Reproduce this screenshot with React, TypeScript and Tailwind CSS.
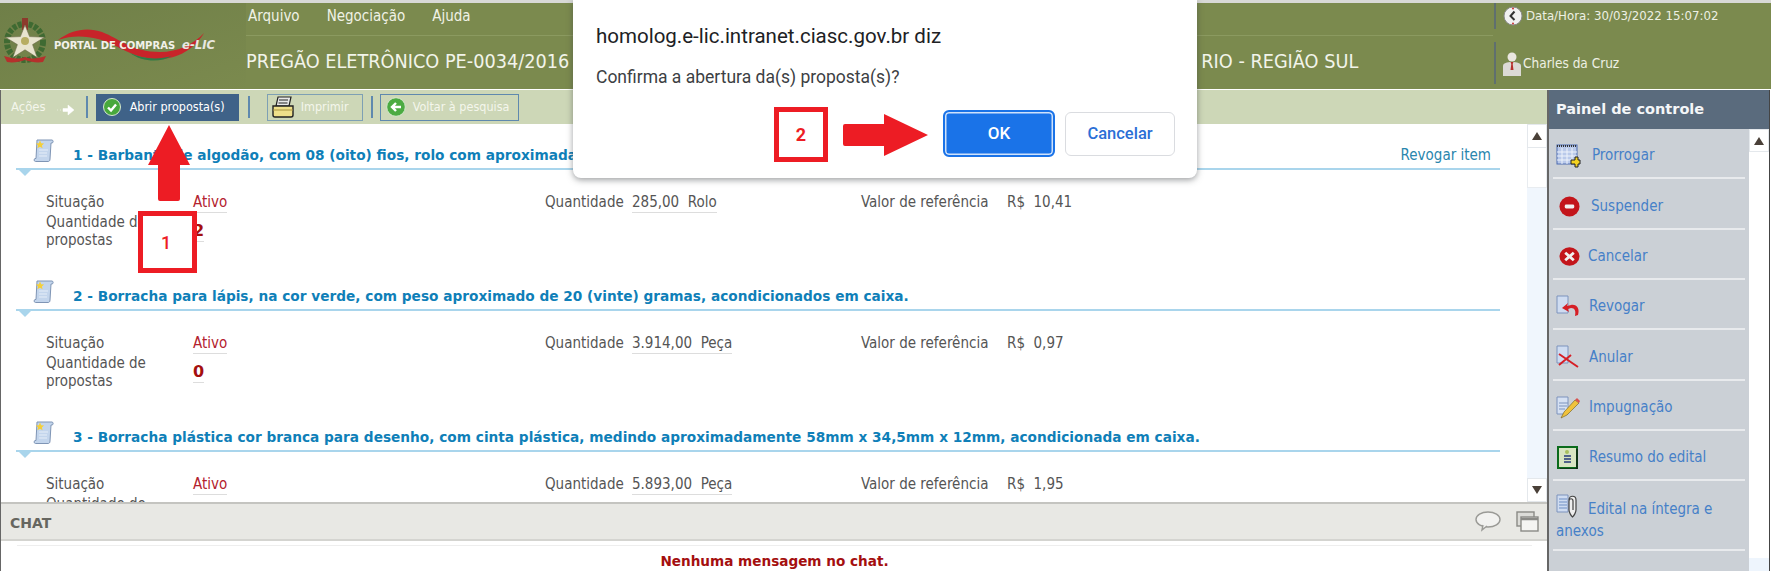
import React from "react";

const body = { fontFamily: '"DejaVu Sans Condensed", "Noto Sans", sans-serif' };
const bold = { fontFamily: '"DejaVu Sans", Verdana, sans-serif' };
const dlg = { fontFamily: 'Roboto, "Noto Sans", sans-serif' };

function Emblem() {
  return (
    <svg width="46" height="48" viewBox="0 0 46 48">
      <circle cx="23" cy="26" r="18" fill="none" stroke="#3f6a32" strokeWidth="6" strokeDasharray="4 1.5" />
      <rect x="20" y="2" width="6" height="12" fill="#8c3a2c" />
      <path d="M23 9l4.6 11.6 15 .6-12 7.4 4.6 13L23 33.8 10.800 41.600l4.600-13-12-7.400 15-.6z" fill="#e8e4cf" stroke="#6d6a4a" strokeWidth=".6" />
      <circle cx="23" cy="25" r="4" fill="#b7ad63" />
      <path d="M2 40c8 2 13 4 21 1 8 3 13 1 21-1l-3 6c-6 1-12 0-18-2-6 2-12 3-18 2z" fill="#b5302c" />
    </svg>
  );
}

function Logo() {
  return (
    <div className="relative w-[246px] h-[86px] shrink-0 bg-gradient-to-br from-[#6f7f48] to-[#7b8a4e]">
      <div className="absolute left-[2px] top-[13px]"><Emblem /></div>
      <svg className="absolute left-[50px] top-[20px]" width="170" height="42" viewBox="0 0 170 42">
        <path d="M8 17C22 6 38 4 52 9c18 7 30 20 58 20 18 0 34-8 44-19-10 17-28 27-48 26-26-1-38-15-58-20C36 13 22 12 8 17z" fill="#c8242a" />
        <path d="M80 30c12 6 28 7 42 3-12 7-30 6-42-3z" fill="#2f7a45" />
      </svg>
      <span className="absolute left-[54px] top-[36px] text-[10px] leading-[14px] font-bold text-[#f2f2ea] whitespace-nowrap" style={bold}>PORTAL DE COMPRAS</span>
      <span className="absolute left-[182px] top-[34px] text-[13px] leading-[16px] font-bold italic text-[#e8e8e0] whitespace-nowrap" style={body}>e-LIC</span>
    </div>
  );
}

function Clock() {
  return (
    <svg width="20" height="20" viewBox="0 0 20 20">
      <circle cx="10" cy="10" r="9" fill="#f1f1f1" stroke="#8b8b8b" />
      <path d="M11.500 5.500L7.500 10l4 4" fill="none" stroke="#333" strokeWidth="2" />
      <circle cx="10" cy="2.500" r="1" fill="#c33" /><circle cx="10" cy="17.500" r="1" fill="#c33" />
    </svg>
  );
}

function Person() {
  return (
    <svg width="20" height="25" viewBox="0 0 20 25">
      <circle cx="10" cy="6" r="4.500" fill="#e9e6df" />
      <path d="M1 25V15c0-3 4-4 9-4s9 1 9 4v10z" fill="#dcdad5" />
      <path d="M8.500 11h3l-.8 2 .8 6H8.500l.8-6z" fill="#b5302c" />
    </svg>
  );
}

function Sep() {
  return <div className="w-[2px] h-[22px] bg-[#5f89ae] shrink-0" />;
}

function Check() {
  return (
    <svg width="18" height="18" viewBox="0 0 18 18">
      <circle cx="9" cy="9" r="8.500" fill="#48a83c" stroke="#d7e8cf" />
      <path d="M5 9.500l3 3 5-6" fill="none" stroke="#fff" strokeWidth="2.400" />
    </svg>
  );
}

function Printer() {
  return (
    <svg width="24" height="24" viewBox="0 0 24 24">
      <path d="M7 2h13l-2 9H5z" fill="#e8e8e8" stroke="#222" strokeWidth="1.200" />
      <path d="M8 5h9M7.500 8h9" stroke="#222" />
      <path d="M2 11h20v9c0 1-1 2-2 2H4c-1 0-2-1-2-2z" fill="#efe08a" stroke="#222" strokeWidth="1.400" />
      <path d="M2 15h20" stroke="#a8933f" />
    </svg>
  );
}

function Back() {
  return (
    <svg width="20" height="20" viewBox="0 0 20 20">
      <circle cx="10" cy="10" r="9.300" fill="#4cab42" stroke="#d7e8cf" />
      <path d="M15 10H7M10 6l-4 4 4 4" fill="none" stroke="#fff" strokeWidth="2.400" />
    </svg>
  );
}

function Scroll() {
  return (
    <svg width="21" height="23" viewBox="0 0 21 23">
      <path d="M4 1h15c1.500 0 1.500 3 0 3h-1l-1 16c0 2-1 2.500-2 2.500H2.500C1 22.500.500 20 2 19.500H3z" fill="#c3d5ec" stroke="#7f95b5" />
      <path d="M6 11h9M6 14h8M6 17h8" stroke="#e6eef8" />
      <path d="M7 1.500l1.200 2.700 2.900.3-2.200 1.900.7 2.900L7 7.800 4.400 9.300l.7-2.900L2.900 4.500l2.900-.3z" fill="#f4cf3a" />
    </svg>
  );
}

const items = [
  { t: "1 - Barbante de algodão, com 08 (oito) fios, rolo com aproximadamente 500 metros.", q: "285,00", u: "Rolo", v: "10,41", n: "2", rev: true },
  { t: "2 - Borracha para lápis, na cor verde, com peso aproximado de 20 (vinte) gramas, acondicionados em caixa.", q: "3.914,00", u: "Peça", v: "0,97", n: "0", rev: false },
  { t: "3 - Borracha plástica cor branca para desenho, com cinta plástica, medindo aproximadamente 58mm x 34,5mm x 12mm, acondicionada em caixa.", q: "5.893,00", u: "Peça", v: "1,95", n: "0", rev: false },
];

function Item({ it }: { it: (typeof items)[number] }) {
  return (
    <div className="h-[141px] shrink-0">
      <div className="relative ml-[15px] w-[1484px] h-[46px] border-b-2 border-[#a9d5ec] flex items-start pt-[15px] pl-[17px]">
        <Scroll />
        <span className="ml-[19px] mt-[6px] text-[13.700px] leading-[20px] font-bold text-[#0f7fb8] whitespace-nowrap" style={bold}>{it.t}</span>
        {it.rev && <span className="absolute right-[9px] top-[21px] text-[15px] leading-[20px] text-[#2a86ad]">Revogar item</span>}
        <div className="absolute left-[2px] top-[45px] w-0 h-0 border-l-[7px] border-r-[7px] border-t-[7px] border-l-transparent border-r-transparent border-t-[#a9d5ec]" />
      </div>
      <div className="ml-[45px] mt-[23px] grid grid-cols-[147px_352px_87px_229px_146px_1fr] text-[15px] leading-[18.500px] text-[#555]">
        <span>Situação</span>
        <span><span className="inline-block border-b border-[#ddd] text-[#b3222e] leading-[17.500px]">Ativo</span></span>
        <span>Quantidade</span>
        <span><span className="inline-block border-b border-[#ddd] leading-[17.500px] whitespace-pre">{it.q}  {it.u}</span></span>
        <span>Valor de referência</span>
        <span className="whitespace-pre">R$  {it.v}</span>
        <span className="w-[118px]">Quantidade de propostas</span>
        <span className="self-center"><span className="inline-block border-b border-[#ddd] text-[16px] leading-[20px] font-bold text-[#a40f0f]" style={bold}>{it.n}</span></span>
      </div>
    </div>
  );
}

function ScrollBtn({ up, h }: { up: boolean; h: string }) {
  return (
    <div className={`${h} bg-white border border-[#e4e8ec] flex items-center justify-center shrink-0`}>
      <div className={up
        ? "w-0 h-0 border-l-[5px] border-r-[5px] border-b-[8px] border-l-transparent border-r-transparent border-b-[#4a4038]"
        : "w-0 h-0 border-l-[5px] border-r-[5px] border-t-[8px] border-l-transparent border-r-transparent border-t-[#4a4038]"} />
    </div>
  );
}

const doc = "M3 1h11v17H3z";
function PanelIcon({ k }: { k: string }) {
  if (k === "cal") return (
    <svg width="25" height="26" viewBox="0 0 25 26">
      <rect x="1" y="2" width="20" height="19" fill="#b9c9ea" stroke="#4c6ab0" />
      <path d="M1 3h20" stroke="#333" strokeWidth="2" strokeDasharray="1 1" />
      <path d="M1 9h20M1 13h20M1 17h20M6 5v16M11 5v16M16 5v16" stroke="#eef3fb" />
      <path d="M16 16h4v-3h3v3h2v4h-2v3h-3v-3h-4z" transform="translate(-1 1)" fill="#f4d21f" stroke="#222" />
    </svg>
  );
  if (k === "minus") return (
    <svg width="21" height="21" viewBox="0 0 22 22">
      <circle cx="11" cy="11" r="10.500" fill="#c3151b" />
      <rect x="6" y="9" width="10" height="4" rx="1.500" fill="#f1f1f1" />
    </svg>
  );
  if (k === "x") return (
    <svg width="21" height="19" viewBox="0 0 22 20">
      <ellipse cx="11" cy="10" rx="10.500" ry="9.800" fill="#c3151b" />
      <path d="M6.500 6l9 8M15.500 6l-9 8" stroke="#f1f1f1" strokeWidth="3" />
    </svg>
  );
  if (k === "rev") return (
    <svg width="24" height="24" viewBox="0 0 24 24">
      <path d={doc} fill="#cfdcf1" stroke="#7d93bd" transform="translate(-2 0)" />
      <path d="M22 20c2-6-1-11-7-10l-4 1 1-3-6 5 7 4-1-3 3-1c4 0 5 3 4 8z" fill="#d61f26" />
    </svg>
  );
  if (k === "null") return (
    <svg width="24" height="24" viewBox="0 0 24 24">
      <path d={doc} fill="#cfdcf1" stroke="#7d93bd" transform="translate(-2 0)" />
      <path d="M3 9l19 13M3 20L15 10" stroke="#d61f26" strokeWidth="2" fill="none" />
    </svg>
  );
  if (k === "pen") return (
    <svg width="24" height="24" viewBox="0 0 24 24">
      <path d={doc} fill="#d6e1f3" stroke="#7d93bd" transform="translate(-2 0)" />
      <path d="M2 7h9M2 10h8M2 13h6" stroke="#7d93bd" transform="translate(1 0)" />
      <path d="M5 22l3-6L19 4l4 3-12 12z" fill="#f0c23c" stroke="#6b5a20" strokeWidth=".6" />
      <path d="M19 4l4 3 1-2-3-3z" fill="#d9534f" />
    </svg>
  );
  if (k === "res") return (
    <svg width="21" height="23" viewBox="0 0 21 23">
      <rect x="1" y="1" width="19" height="21" fill="#d8e5c2" stroke="#0b6b1c" strokeWidth="2" />
      <path d="M20 3v20H3" stroke="#111" fill="none" strokeWidth="1.200" />
      <circle cx="10" cy="6" r="2" fill="#a8c060" />
      <path d="M7 10h7M7 13h7M7 16h7" stroke="#253a7a" strokeWidth="1.500" />
    </svg>
  );
  return (
    <svg width="23" height="24" viewBox="0 0 23 24">
      <path d={doc} fill="#cfdcf1" stroke="#7d93bd" transform="translate(-2 0)" />
      <path d="M3 5h8M3 8h8M3 11h8M3 14h8" stroke="#6f8fc4" />
      <path d="M13 6c0-5 7-5 7 0v10c0 2-2 6-3.500 7C15 22 13 18 13 16V7c0-3 4-3 4 0v9" fill="#eee" stroke="#444" strokeWidth="1.200" />
    </svg>
  );
}

const panel: { k: string; t: string; h: string; tx: string; ix: string }[] = [
  { k: "cal", t: "Prorrogar", h: "h-[50px]", tx: "ml-[11px]", ix: "" },
  { k: "minus", t: "Suspender", h: "h-[51px]", tx: "ml-[11px]", ix: "ml-[3px]" },
  { k: "x", t: "Cancelar", h: "h-[50px]", tx: "ml-[8px]", ix: "ml-[3px]" },
  { k: "rev", t: "Revogar", h: "h-[50px]", tx: "ml-[9px]", ix: "" },
  { k: "null", t: "Anular", h: "h-[51px]", tx: "ml-[9px]", ix: "" },
  { k: "pen", t: "Impugnação", h: "h-[50px]", tx: "ml-[9px]", ix: "" },
  { k: "res", t: "Resumo do edital", h: "h-[50px]", tx: "ml-[11px]", ix: "ml-[1px]" },
];

function PanelRow({ r }: { r: (typeof panel)[number] }) {
  return (
    <div className={`${r.h} mx-[4px] border-b-2 border-[#e8eaed] flex items-center pl-[3px] pt-[5px] text-[15px] text-[#4680c8] shrink-0`}>
      <span className={r.ix}><PanelIcon k={r.k} /></span>
      <span className={r.tx}>{r.t}</span>
    </div>
  );
}

export default function App() {
  return (
    <div className="relative w-[1771px] h-[571px] overflow-hidden bg-white flex flex-col" style={body}>
      <div className="h-[3px] bg-[#d8d9d6] shrink-0" />
      {/* header */}
      <div className="h-[86px] bg-[#7b8a4e] flex shrink-0">
        <Logo />
        <div className="w-[1247px] shrink-0 flex flex-col">
          <div className="h-[33px] border-b border-[#8b9a60] flex items-center gap-[27px] pl-[2px] pb-[5px] text-[15px] text-[#f0f2e6]">
            <span>Arquivo</span><span>Negociação</span><span>Ajuda</span>
          </div>
          <div className="flex-1 flex items-center text-[19.700px] text-[#f2f4ea] whitespace-nowrap pb-[2px]">
            <span>PREGÃO ELETRÔNICO PE-0034/2016</span>
            <span className="ml-[632px]">RIO - REGIÃO SUL</span>
          </div>
        </div>
        <div className="flex-1 flex flex-col pl-[1px] text-[13.500px] text-[#eef0e4]">
          <div className="h-[26px] border-l-2 border-[#5f6f6f] flex items-center pl-[7px] gap-[3px] text-[13.100px] whitespace-nowrap">
            <Clock /><span>Data/Hora: 30/03/2022 15:07:02</span>
          </div>
          <div className="mt-[13px] h-[42px] border-l-2 border-[#5f6f6f] flex items-center pl-[6px] gap-[1px] whitespace-nowrap">
            <Person /><span>Charles da Cruz</span>
          </div>
        </div>
      </div>

      {/* main */}
      <div className="flex-1 min-h-0 flex pt-[1px]">
        <div className="w-[1547px] shrink-0 flex flex-col border-l border-[#666] min-w-0">
          <div className="h-[34px] bg-[#cdd7b7] flex items-center shrink-0 text-[12.500px] text-[#f4f6ec] pl-[10px] whitespace-nowrap">
            <span className="text-[13px]">Ações</span>
            <svg className="ml-[11px] mr-[11px] mt-[6px]" width="18" height="12" viewBox="0 0 18 12">
              <path d="M0 6h1M3 6h1M6 4.500h5V1l6 5-6 5V7.500H6z" fill="#fff" stroke="#fff" strokeWidth=".5" />
            </svg>
            <Sep />
            <div className="ml-[8px] w-[143px] h-[27px] bg-[#3f6288] flex items-center pl-[7px] gap-[9px] text-white shrink-0"><Check /><span>Abrir proposta(s)</span></div>
            <div className="ml-[9px]"><Sep /></div>
            <div className="ml-[17px] w-[96px] h-[27px] border border-[#7ea0b4] flex items-center pl-[3px] gap-[6px] shrink-0"><Printer /><span>Imprimir</span></div>
            <div className="ml-[8px]"><Sep /></div>
            <div className="ml-[7px] w-[139px] h-[27px] border border-[#5f89ae] flex items-center pl-[5px] gap-[7px] shrink-0"><Back /><span>Voltar à pesquisa</span></div>
          </div>

          <div className="flex-1 min-h-0 flex">
            <div className="flex-1 min-w-0 overflow-hidden flex flex-col">
              {items.map((it) => <Item key={it.t} it={it} />)}
            </div>
            <div className="w-[20px] shrink-0 bg-[#f0f6fd] flex flex-col">
              <ScrollBtn up h="h-[24px]" />
              <div className="h-[40px] bg-white border-x border-b border-[#e8ecf0] shrink-0" />
              <div className="flex-1" />
              <ScrollBtn up={false} h="h-[24px]" />
            </div>
          </div>

          <div className="h-[39px] shrink-0 bg-[#e8e8e4] border-t-2 border-[#c4c4c0] border-b-2 border-b-[#d4d4d0] flex items-center pl-[9px] pr-[8px]">
            <span className="text-[14px] font-bold text-[#666660] pt-[3px]" style={bold}>CHAT</span>
            <svg className="ml-auto" width="26" height="21" viewBox="0 0 26 21">
              <ellipse cx="13" cy="8.500" rx="12" ry="7.500" fill="#f2f2f0" stroke="#9a9a96" strokeWidth="1.400" />
              <path d="M8 14l-1 5 5-4" fill="#f2f2f0" stroke="#9a9a96" strokeWidth="1.400" />
            </svg>
            <svg className="ml-[15px]" width="23" height="21" viewBox="0 0 23 21">
              <rect x="1" y="1" width="17" height="14" fill="#dcdcd8" stroke="#8a8a86" strokeWidth="1.400" />
              <rect x="5" y="6" width="17" height="14" fill="#f4f4f2" stroke="#8a8a86" strokeWidth="1.400" />
              <path d="M5 8h17" stroke="#8a8a86" strokeWidth="2.500" />
            </svg>
          </div>

          <div className="h-[30px] shrink-0 pt-[4px] pl-[16px] pr-[15px]">
            <div className="h-full border-t border-[#eeeeee] flex justify-center pt-[6px] text-[13.600px] leading-[18px] font-bold text-[#a40f0f]" style={bold}>
              Nenhuma mensagem no chat.
            </div>
          </div>
        </div>

        {/* panel */}
        <div className="w-[223px] shrink-0 flex flex-col border-l-2 border-r border-l-[#666] border-r-[#444] bg-white">
          <div className="h-[39px] bg-[#5a6b7d] flex items-center pl-[7px] text-[14.500px] font-bold text-[#f4f6f8] shrink-0" style={bold}>Painel de controle</div>
          <div className="flex-1 min-h-0 flex">
            <div className="w-[200px] shrink-0 bg-[#cbd0d6] flex flex-col overflow-hidden">
              {panel.map((r) => <PanelRow key={r.t} r={r} />)}
              <div className="h-[70px] mx-[4px] border-b-2 border-[#e8eaed] pl-[3px] pt-[17px] text-[15px] leading-[22px] text-[#4680c8] shrink-0">
                <span className="inline-block align-middle mr-[9px] mt-[-8px]"><PanelIcon k="clip" /></span>Edital na íntegra e anexos
              </div>
              <div className="h-[12px] mx-[4px] shrink-0" />
            </div>
            <div className="flex-1 flex flex-col">
              <ScrollBtn up h="h-[23px]" />
              <div className="flex-1" />
              <div className="h-[13px] bg-[#eef5fd] shrink-0" />
            </div>
          </div>
        </div>
      </div>

      {/* browser dialog */}
      <div className="absolute left-[573px] top-0 w-[624px] h-[178px] bg-white rounded-b-[8px] shadow-[0_2px_6px_rgba(60,64,67,0.5)] pl-[23px]" style={dlg}>
        <div className="pt-[24px] text-[20.500px] leading-[24px] text-[#202124]">homolog.e-lic.intranet.ciasc.gov.br diz</div>
        <div className="pt-[18px] text-[17.500px] leading-[22px] text-[#3c4043]">Confirma a abertura da(s) proposta(s)?</div>
        <div className="absolute left-[370px] top-[110px] w-[112px] h-[47px] rounded-[6px] bg-[#1a73e8] border-2 border-[#1a73e8] shadow-[inset_0_0_0_1.500px_#cfe2fb] flex items-center justify-center text-[17px] font-medium text-white">OK</div>
        <div className="absolute left-[492px] top-[112px] w-[110px] h-[44px] rounded-[6px] bg-white border border-[#dadce0] flex items-center justify-center text-[16.500px] font-medium text-[#2b6fd6]">Cancelar</div>
      </div>

      {/* annotations */}
      <svg className="absolute left-[148px] top-[125px]" width="42" height="76" viewBox="0 0 42 76">
        <path d="M21 0l21 40H32v34a2 2 0 0 1-2 2H12a2 2 0 0 1-2-2V40H0z" fill="#ed1c24" />
      </svg>
      <div className="absolute left-[138px] top-[211px] w-[59px] h-[62px] bg-white border-[5px] border-[#ed1c24] flex items-center justify-center pr-[3px] text-[18px] font-medium text-[#ed1c24]" style={dlg}>1</div>
      <svg className="absolute left-[843px] top-[114px]" width="85" height="42" viewBox="0 0 85 42">
        <path d="M0 12a2 2 0 0 1 2-2h39V0l44 21-44 21V32H2a2 2 0 0 1-2-2z" fill="#ed1c24" />
      </svg>
      <div className="absolute left-[774px] top-[107px] w-[54px] h-[55px] bg-white border-[5px] border-[#ed1c24] flex items-center justify-center text-[18px] font-bold text-[#ed1c24]" style={dlg}>2</div>
    </div>
  );
}
